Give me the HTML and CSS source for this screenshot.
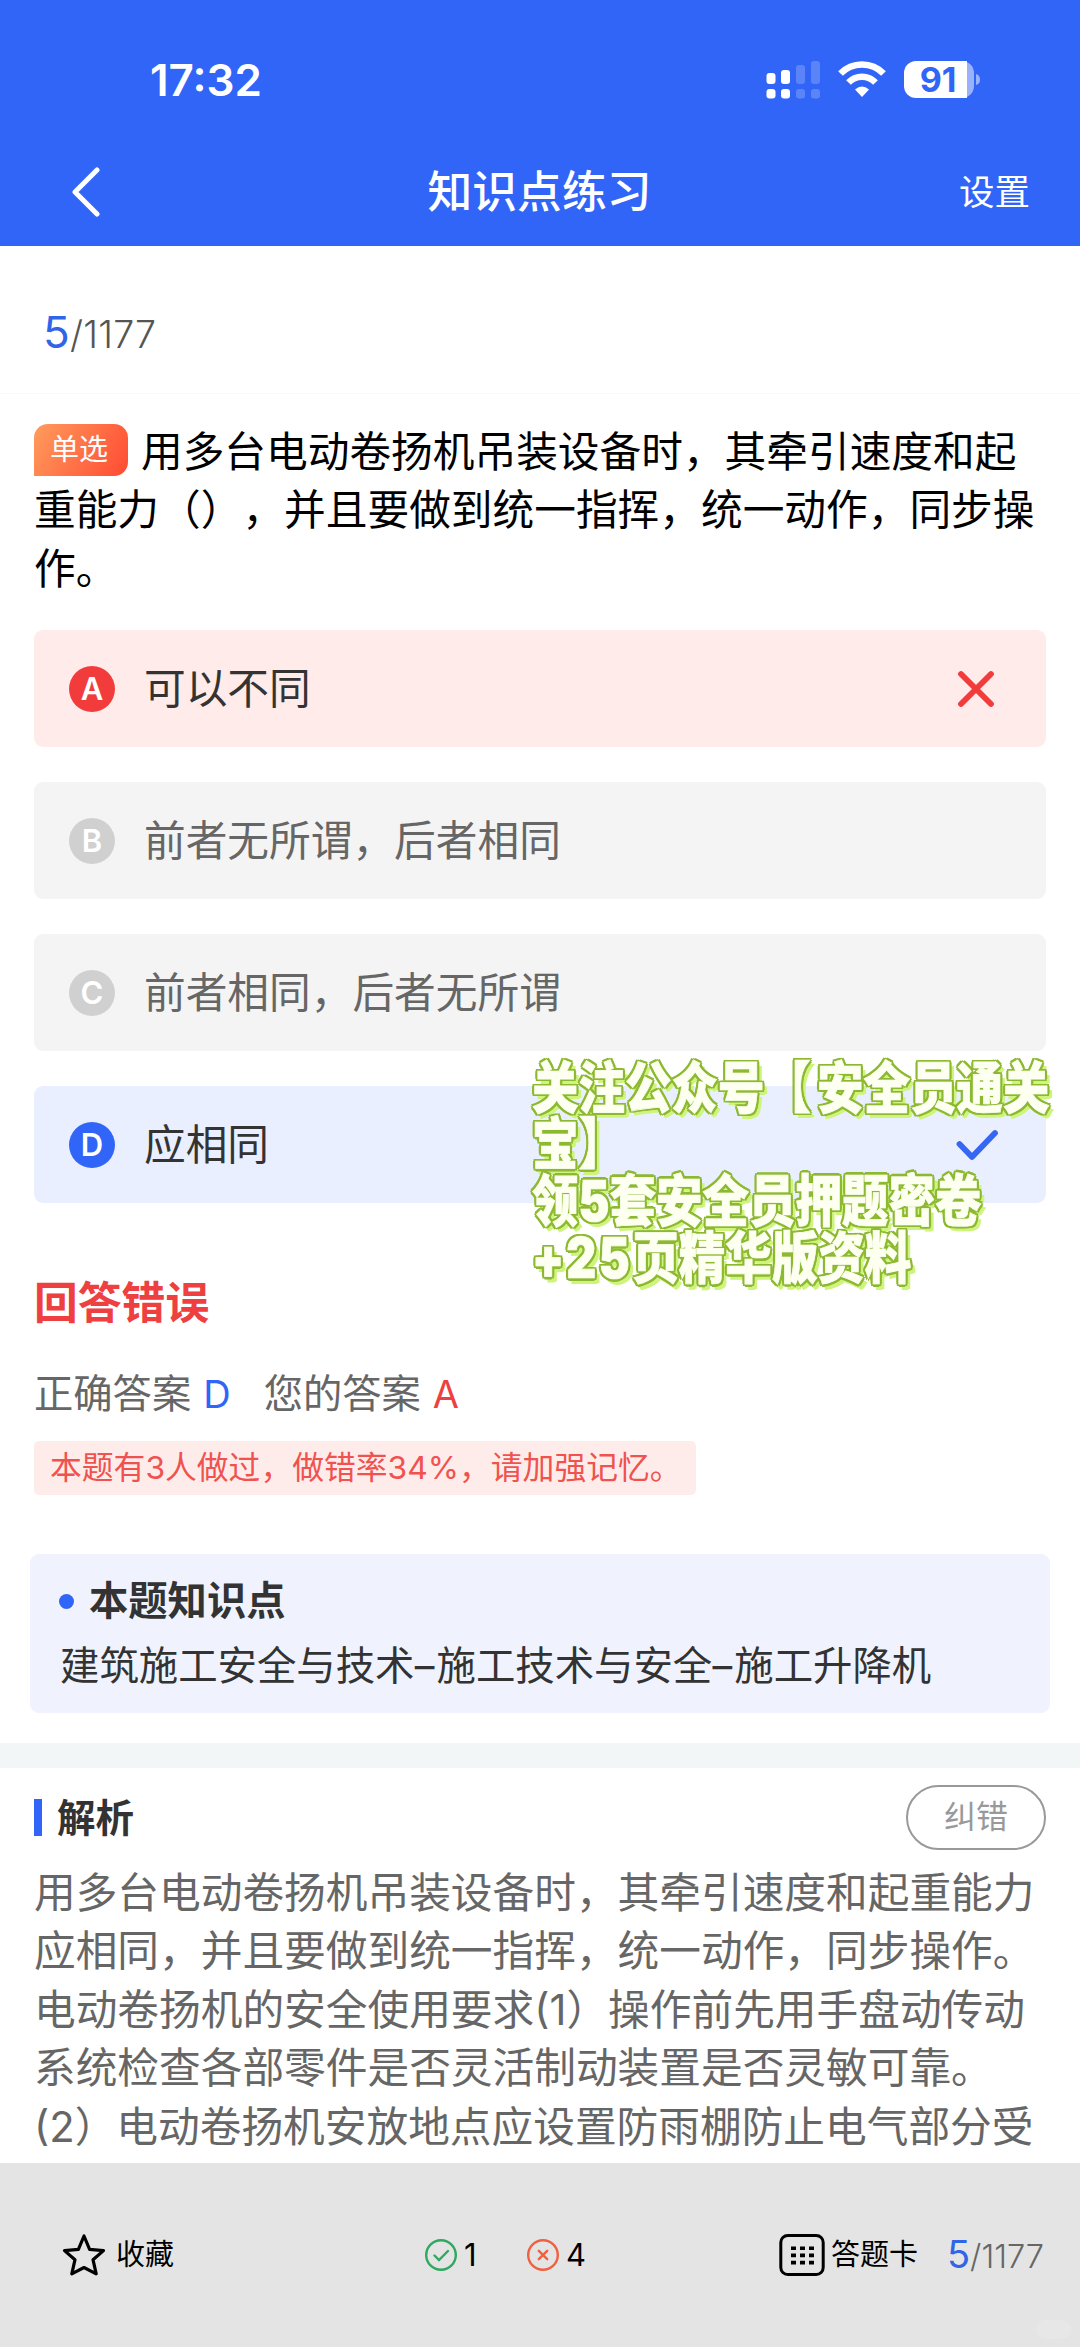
FILE: index.html
```html
<!DOCTYPE html>
<html lang="zh-CN">
<head>
<meta charset="utf-8">
<title>知识点练习</title>
<link rel="stylesheet" href="styles.css">
</head>
<body>
<div class="screen">
  <header class="header">
    <div class="status">
      <span class="time">17:32</span>
      <svg class="status-icons" width="216" height="40" viewBox="0 0 216 40" fill="#fff">
        <rect x="0.5" y="13" width="9" height="11" rx="3"/><rect x="15" y="10" width="9" height="14" rx="3"/>
        <rect x="0.5" y="29" width="9" height="9.5" rx="3"/><rect x="15" y="29" width="9" height="9.5" rx="3"/>
        <g opacity=".2"><rect x="30" y="5" width="9" height="19" rx="3"/><rect x="45" y="1" width="9" height="23" rx="3"/><rect x="30" y="29" width="9" height="9.5" rx="3"/><rect x="45" y="29" width="9" height="9.5" rx="3"/></g>
        <g fill="none" stroke="#fff" stroke-width="6.5"><path d="M74.5 13.5a30 30 0 0 1 43 0"/><path d="M82.500 22.500a18.500 18.500 0 0 1 27 0"/></g>
        <path d="M89 29.500q7-6 14 0L96 37z"/>
        <path opacity=".5" d="M190 1h6a12 12 0 0 1 12 12v13a12 12 0 0 1-12 12h-6z"/>
        <path d="M150 1h51v37h-51a12 12 0 0 1-12-12V13a12 12 0 0 1 12-12z"/>
        <path opacity=".5" d="M210 14q4 1 4 5.500t-4 5.500z"/>
        <text x="172" y="31.500" class="battery-text" text-anchor="middle">91</text>
      </svg>
    </div>
    <nav class="nav">
      <svg class="back" width="32" height="50" viewBox="0 0 32 50"><path d="M27 3 5 25 27 47" fill="none" stroke="#fff" stroke-width="5" stroke-linecap="round" stroke-linejoin="round"/></svg>
      <h1 class="title">知识点练习</h1>
      <span class="settings">设置</span>
    </nav>
  </header>

  <div class="progress"><span class="now">5</span>/1177</div>

  <main class="question">
    <p class="stem"><span class="badge">单选</span>用多台电动卷扬机吊装设备时，其牵引速度和起<br>重能力（），并且要做到统一指挥，统一动作，同步操<br>作。</p>
    <div class="options">
      <div class="option wrong"><i class="letter">A</i><span class="label">可以不同</span>
        <svg class="mark" width="46" height="46" viewBox="0 0 46 46"><path d="M8 8 38 38M38 8 8 38" stroke="#f23c3c" stroke-width="5.800" stroke-linecap="round"/></svg></div>
      <div class="option"><i class="letter">B</i><span class="label">前者无所谓，后者相同</span></div>
      <div class="option"><i class="letter">C</i><span class="label">前者相同，后者无所谓</span></div>
      <div class="option right"><i class="letter">D</i><span class="label">应相同</span>
        <svg class="mark" width="46" height="46" viewBox="0 0 46 46"><path d="M6.500 22 19 35 42 11" fill="none" stroke="#3667f2" stroke-width="5.800" stroke-linecap="round" stroke-linejoin="round"/></svg></div>
      <div class="promo">关注公众号<span class="bracket">【</span>安全员通关<br>宝】<br>领5套安全员押题密卷<br><span class="wide">+25</span>页精华版资料</div>
    </div>
    <h2 class="verdict">回答错误</h2>
    <div class="answers"><span>正确答案</span><b class="blue">D</b><span class="yours">您的答案</span><b class="red">A</b></div>
    <div class="stat">本题有3人做过，做错率34%，请加强记忆。</div>
  </main>

  <section class="topic">
    <h3 class="topic-title"><i class="dot"></i>本题知识点</h3>
    <p class="topic-body">建筑施工安全与技术<span class="dash">–</span>施工技术与安全<span class="dash">–</span>施工升降机</p>
  </section>

  <section class="analysis">
    <div class="analysis-head"><i class="bar"></i><h3 class="analysis-title">解析</h3><span class="report">纠错</span></div>
    <p class="analysis-body">用多台电动卷扬机吊装设备时，其牵引速度和起重能力<br>应相同，并且要做到统一指挥，统一动作，同步操作。<br>电动卷扬机的安全使用要求(1）操作前先用手盘动传动<br>系统检查各部零件是否灵活制动装置是否灵敏可靠。<br>(2）电动卷扬机安放地点应设置防雨棚防止电气部分受</p>
  </section>

  <footer class="footer">
    <div class="tool favorite">
      <svg width="46" height="46" viewBox="0 0 46 46"><path d="M23 4 28.600 17.400 42.500 18.600 32 27.700 35.200 41.800 23 35.500 10.800 41.800 14 27.700 3.500 18.600 17.400 17.400z" fill="none" stroke="#000" stroke-width="3.200" stroke-linejoin="round"/></svg>
      <span>收藏</span>
    </div>
    <div class="tool correct">
      <svg width="34" height="34" viewBox="0 0 34 34" fill="none" stroke="#2fa860" stroke-width="2.400"><circle cx="17" cy="17" r="14.800"/><path d="m10.500 17.500 4.500 4.500 9-9" stroke-linecap="round"/></svg>
      <span>1</span>
    </div>
    <div class="tool incorrect">
      <svg width="34" height="34" viewBox="0 0 34 34" fill="none" stroke="#ef6140" stroke-width="2.400"><circle cx="17" cy="17" r="14.800"/><path d="m12.800 12.800 8.400 8.400M21.200 12.800l-8.400 8.400" stroke-linecap="round"/></svg>
      <span>4</span>
    </div>
    <div class="tool sheet">
      <svg width="46" height="44" viewBox="0 0 46 44"><rect x="1.800" y="2.500" width="42.400" height="39" rx="7" fill="none" stroke="#000" stroke-width="3"/><path d="M12 15.200h23M12 22.400h23M12 29.600h23" stroke="#000" stroke-width="3.600" stroke-dasharray="5 4"/></svg>
      <span>答题卡</span>
    </div>
    <div class="count"><span class="now">5</span>/1177</div>
    <i class="pill"></i>
  </footer>
</div>
</body>
</html>
```
FILE: styles.css
```css
* { box-sizing: border-box; }
body, h1, h2, h3, p { margin: 0; }
i { font-style: normal; }
svg { display: block; flex: none; }
body { font-family: "Inter", "Noto Sans CJK SC", sans-serif; text-spacing-trim: space-all; background: #fff; color: #333; }
.screen { position: relative; width: 1080px; height: 2347px; overflow: hidden; display: flex; flex-direction: column; background: #fff; }

.header { height: 246px; flex: none; background: #3165f7; color: #fff; }
.status { height: 140px; padding: 59px 98px 0 150px; display: flex; justify-content: space-between; align-items: flex-start; }
.time { font-size: 44px; font-weight: 600; line-height: 42px; }
.status-icons { overflow: visible; margin-top: 1px; }
.battery-text { font-size: 34px; font-weight: 700; fill: #3165f7; }
.nav { height: 104px; padding: 0 50px 0 70px; display: grid; grid-template-columns: 110px 1fr 71px; align-items: center; }
.title { font-size: 44.8px; font-weight: 500; line-height: 64px; text-align: center; padding-right: 60px; }
.settings { font-size: 35.5px; line-height: 50px; white-space: nowrap; padding-top: 2px; }
.back { align-self: center; }

.progress { height: 148px; flex: none; padding: 61px 0 0 43px; border-bottom: 1px solid #f8f8f8; font-size: 37.5px; font-weight: 300; line-height: 50px; color: #555; letter-spacing: .2px; }
.now { font-size: 44px; font-weight: 400; color: #3165e8; }

.question { flex: none; height: 1160px; padding: 29px 34px 0; }
.stem { font-size: 41.7px; line-height: 58.4px; color: #000; white-space: nowrap; height: 207px; }
.badge { display: inline-flex; align-items: center; justify-content: center; vertical-align: 7px; width: 94px; height: 52px; margin: -10px 13px -10px 0; padding-right: 4px; border-radius: 14px 14px 14px 0; background: linear-gradient(120deg, #ff9c5c, #ff4a33); color: #fff; font-size: 29px; line-height: 40px; }
.options { position: relative; display: flex; flex-direction: column; gap: 35px; }
.option { height: 117px; padding: 0 47px 0 35px; display: flex; align-items: center; border-radius: 9px; background: #f4f4f4; color: #666; }
.letter { width: 46px; height: 46px; border-radius: 50%; background: #d0d0d0; color: #fff; display: flex; align-items: center; justify-content: center; font-size: 31px; font-weight: 600; }
.label { flex: 1; padding-left: 29px; font-size: 41.7px; line-height: 60px; }
.wrong { background: #feebea; color: #333; }
.wrong .letter { background: #f23c3c; }
.right { background: #e9effe; color: #333; }
.right .letter { background: #3165f7; }

.promo { position: absolute; left: 498px; top: 430px; width: 540px; font-size: 46.5px; font-weight: 900; line-height: 47.2px; white-space: nowrap; color: #fdfff0; -webkit-text-stroke: .6px #fdfff0; transform: scaleY(1.2); transform-origin: 0 0; text-shadow: 2.500px 0 #8db932, -2.500px 0 #8db932, 0 2px #8db932, 0 -2px #8db932, 2px 1.600px #8db932, -2px 1.600px #8db932, 2px -1.600px #8db932, -2px -1.600px #8db932, 4px 3.500px #cff47c, 5px 3.500px #cff47c, 3px 4.500px #cff47c; }
.bracket { margin-right: 6px; }
.wide { letter-spacing: 2.5px; }

.verdict { margin-top: 69px; font-size: 43.8px; font-weight: 700; line-height: 64px; color: #ee4040; }
.answers { margin-top: 29px; display: flex; align-items: center; font-size: 39.3px; line-height: 58px; color: #666; }
.answers b { font-weight: 400; font-size: 38px; margin-left: 12px; }
.blue { color: #3165f7; }
.red { color: #ee4040; }
.yours { margin-left: 33px; }
.stat { margin-top: 18px; width: 662px; height: 54px; padding-left: 16px; border-radius: 5px; background: #feeceb; color: #f0534f; font-size: 31.8px; line-height: 53px; white-space: nowrap; }

.topic { flex: none; height: 159px; margin: 0 30px 30px; padding: 17px 31px 0 30px; border-radius: 9px; background: #f0f3fe; }
.topic-title { display: flex; align-items: center; gap: 15px; font-size: 39.3px; font-weight: 700; line-height: 60px; margin-left: -1px; }
.dot { width: 15px; height: 15px; border-radius: 50%; background: #3165f7; }
.topic-body { font-size: 39.4px; line-height: 60px; margin-top: 5px; white-space: nowrap; }
.dash { display: inline-block; width: 22px; text-align: center; text-indent: -2px; }

.analysis { flex: none; height: 420px; padding: 17px 34px 0; border-top: 25px solid #f3f6f7; overflow: hidden; }
.analysis-head { display: flex; align-items: center; height: 65px; }
.bar { width: 8px; height: 37px; background: #3165f7; }
.analysis-title { flex: 1; margin-left: 15px; font-size: 38.5px; font-weight: 700; line-height: 58px; }
.report { width: 140px; height: 65px; border: 2.500px solid #999; border-radius: 33px; text-align: center; color: #999; font-size: 32px; line-height: 60px; }
.analysis-body { margin-top: 14px; font-size: 41.7px; line-height: 58.4px; color: #666; white-space: nowrap; }

.footer { position: relative; flex: none; height: 184px; padding: 0 35px 0 61px; display: flex; align-items: center; background: #e4e4e4; color: #000; }
.tool { display: flex; align-items: center; font-size: 29px; line-height: 44px; }
.favorite { width: 363px; gap: 9px; }
.correct { width: 102px; gap: 6px; font-size: 31px; }
.incorrect { width: 253px; gap: 6px; font-size: 31px; }
.sheet { width: 168px; gap: 6px; }
.count { font-size: 32.5px; font-weight: 300; line-height: 44px; color: #666; white-space: nowrap; }
.count .now { font-size: 38px; }
.pill { position: absolute; right: 9px; bottom: 8px; width: 35px; height: 19px; border-radius: 10px; background: #e7e7e7; }
```
